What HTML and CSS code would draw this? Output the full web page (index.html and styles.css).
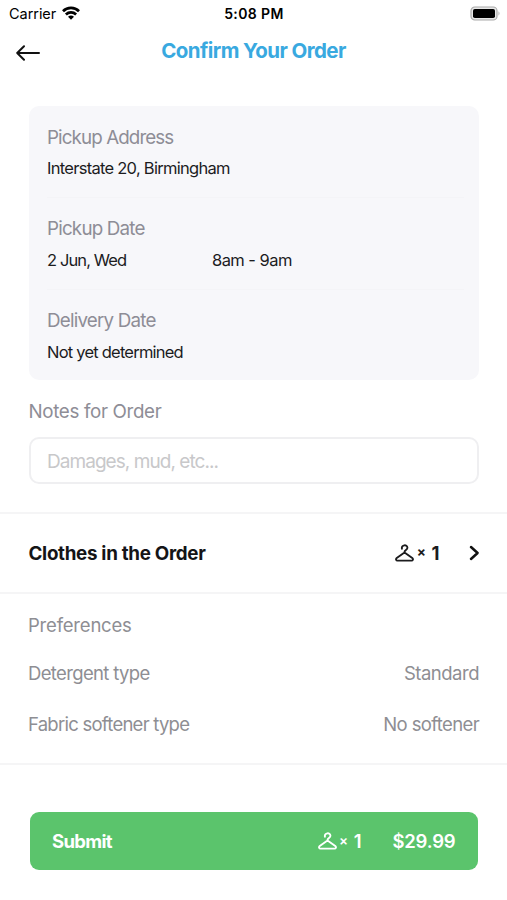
FILE: index.html
```html
<!DOCTYPE html>
<html lang="en">
<head>
<meta charset="utf-8">
<title>Confirm Your Order</title>
<link rel="stylesheet" href="styles.css">
</head>
<body>
<svg class="defs" width="0" height="0" aria-hidden="true">
  <symbol id="hanger" viewBox="0 0 20 19">
    <path d="M7.3 5C6.3 .7 13 .1 13.1 4C13.1 6.4 10 6.2 10 8.5V9M10 9L18.2 14.8C19.5 16 18.9 17.6 17.4 17.6H2.6C1.1 17.6 .5 16 1.8 14.8Z" fill="none" stroke="currentColor" stroke-width="2" stroke-linecap="round" stroke-linejoin="round"/>
  </symbol>
</svg>
<div class="status">
  <div class="carrier"><span>Carrier</span>
    <svg width="18" height="14" viewBox="0 0 18 14" fill="none" stroke="#000" stroke-width="2.7"><path d="M1 5.2C5.4.8 12.6.8 17 5.2M3.9 8.5C6.8 5.7 11.2 5.7 14.1 8.5"/><path d="M9 13.8L6 10.8Q9 8.3 12 10.8Z" fill="#000" stroke="none"/></svg>
  </div>
  <div class="clock">5:08 PM</div>
  <svg class="battery" width="31" height="16" viewBox="0 0 31 16"><rect x="1" y="1" width="26" height="13" rx="3.8" fill="#e8e8e8" stroke="#aaa" stroke-width="1.2"/><rect x="3" y="3" width="22" height="9" rx="1.8"/><path d="M28.5 5.3Q30.5 7.5 28.5 9.7Z" fill="#aaa"/></svg>
</div>
<header class="nav">
  <svg class="back" width="24" height="16" viewBox="0 0 24 16" fill="none" stroke="#111" stroke-width="2" stroke-linecap="round" stroke-linejoin="round"><path d="M23 8H1.2M8 1.2L1.2 8L8 14.8"/></svg>
  <h1>Confirm Your Order</h1>
</header>
<main>
  <section class="card">
    <div class="item"><div class="label l-address">Pickup Address</div><div class="value v-address">Interstate 20, Birmingham</div></div>
    <div class="item"><div class="label l-pickup">Pickup Date</div><div class="value pair"><span class="v-date">2 Jun, Wed</span><span>8am - 9am</span></div></div>
    <div class="item"><div class="label l-delivery">Delivery Date</div><div class="value v-delivery">Not yet determined</div></div>
  </section>
  <section class="notes">
    <label class="label" for="notes">Notes for Order</label>
    <input id="notes" type="text" placeholder="Damages, mud, etc...">
  </section>
  <section class="clothes">
    <h2>Clothes in the Order</h2>
    <div class="count"><svg width="19" height="18"><use href="#hanger"/></svg><span class="times">×</span><span class="number">1</span></div>
    <svg class="chevron" width="11" height="16" viewBox="0 0 11 16" fill="none" stroke="#111" stroke-width="2.5" stroke-linecap="round" stroke-linejoin="round"><path d="M2 2L8.6 8L2 14"/></svg>
  </section>
  <section class="preferences">
    <div class="row"><span class="p-title">Preferences</span></div>
    <div class="row"><span class="p-detergent">Detergent type</span><span class="p-standard">Standard</span></div>
    <div class="row"><span class="p-fabric">Fabric softener type</span><span class="p-none">No softener</span></div>
  </section>
  <button class="submit" type="button">
    <span class="action">Submit</span>
    <span class="count"><svg width="19" height="18"><use href="#hanger"/></svg><span class="times">×</span><span class="number">1</span></span>
    <span class="price">$29.99</span>
  </button>
</main>
</body>
</html>
```
FILE: styles.css
```css
* { box-sizing: border-box; }
body { margin: 0; background: #fff; color: #1c1c1e; font-family: Inter, "Liberation Sans", sans-serif; white-space: nowrap; }
svg { display: block; flex: none; }
.defs { position: absolute; }
h1, h2 { margin: 0; }
.status { height: 28px; display: grid; grid-template-columns: 1fr auto 1fr; align-items: center; padding: 0 6px 0 9px; color: #000; font-size: 14.5px; line-height: 28px; }
.carrier { display: flex; align-items: center; gap: 6px; }
.carrier > span { letter-spacing: -.05px; }
.carrier svg { margin-top: -2px; }
.clock { font-weight: 600; font-size: 14px; letter-spacing: .4px; margin-left: -2px; }
.battery { justify-self: end; margin-top: -1px; }
.nav { height: 78px; display: grid; grid-template-columns: 60px 1fr 60px; align-items: start; }
.back { margin: 17px 0 0 16px; }
h1 { color: #39a9e0; font-size: 20.5px; line-height: 28px; font-weight: 650; letter-spacing: -.58px; text-align: center; margin-top: 9px; }
.card { margin: 0 28px 0 29px; height: 274px; padding: 0 15px 0 18px; border-radius: 10px; background: #f7f7fa; }
.item { height: 92px; padding-top: 18px; border-bottom: 1px solid #f4f4f7; }
.item:last-child { border: 0; height: 90px; }
.label { font-size: 18.8px; line-height: 26px; letter-spacing: -.8px; color: #8e8d96; }
.l-address { letter-spacing: -.9px; padding-top: 1px; margin-bottom: -1px; }
.value { font-size: 16.5px; line-height: 24px; margin-top: 6px; letter-spacing: -.55px; }
.v-address { letter-spacing: -.72px; }
.v-date { letter-spacing: -.9px; }
.v-delivery { letter-spacing: -.78px; }
.pair { display: grid; grid-template-columns: 165px 1fr; }
.notes { height: 134px; padding: 19px 28px 0 29px; border-bottom: 2px solid #f5f5f6; }
.notes .label { display: block; letter-spacing: -.35px; margin-left: -.5px; }
input { display: block; width: 100%; height: 47px; margin-top: 12px; padding: 1px 16px 0; border: 2px solid #efeff1; border-radius: 10px; font: 19px Inter, "Liberation Sans", sans-serif; letter-spacing: -.95px; background: #fff; }
input::placeholder { color: #c8c8ca; }
.clothes { height: 80px; display: flex; align-items: center; padding: 0 27px 0 28.5px; border-bottom: 2px solid #f5f5f6; }
h2 { font-size: 18.8px; font-weight: 700; letter-spacing: -.3px; margin-right: auto; color: #141416; }
.count { display: flex; align-items: center; font-weight: 700; font-size: 18.5px; }
.times { font-size: 13.5px; margin: -2px 0 0 2.5px; }
.number { margin-left: 5.5px; }
.chevron { margin-left: 29.5px; }
.preferences { height: 171px; padding: 8px 28px 0; border-bottom: 2px solid #f5f5f6; font-size: 18.5px; color: #8e8e93; letter-spacing: -.5px; }
.row { height: 51px; display: flex; align-items: center; justify-content: space-between; }
.row:first-child { height: 45px; }
.p-title { letter-spacing: -.2px; }
.p-detergent { letter-spacing: -.65px; }
.p-fabric { letter-spacing: -.75px; }
.p-none { letter-spacing: -.63px; }
.submit { display: flex; align-items: center; width: 448px; height: 58px; margin: 47px 0 0 30px; padding: 0 22.5px 0 22px; border: 0; border-radius: 9px; background: #5bc46c; color: #fff; font: 600 18.5px Inter, "Liberation Sans", sans-serif; }
.action { margin-right: auto; font-weight: 700; letter-spacing: -.7px; }
.submit .count { font-weight: 600; }
.price { margin-left: 31px; letter-spacing: -.2px; }
```
